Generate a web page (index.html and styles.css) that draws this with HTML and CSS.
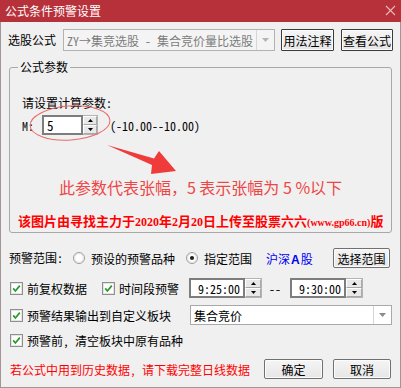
FILE: index.html
```html
<!DOCTYPE html>
<html lang="zh-CN">
<head>
  <meta charset="UTF-8" />
  <meta name="viewport" content="width=device-width, initial-scale=1.0"/>
  <title>公式条件预警设置</title>
  <link rel="stylesheet" href="styles.css">
</head>
<body>
  <div class="window">
    <div class="titlebar">
      <span class="title">公式条件预警设置</span>
      <svg class="close" width="11" height="11" viewBox="0 0 11 11"><path d="M1 1L10 10M10 1L1 10" stroke="#ecb9bb" stroke-width="1.1"/></svg>
    </div>

    <div class="row row-formula">
      <span class="label">选股公式</span>
      <div class="combo combo-formula is-disabled">
        <span class="combo-text">ZY→集竞选股 - 集合竞价量比选股</span>
        <span class="combo-btn"><svg width="7" height="4" viewBox="0 0 7 4"><path d="M0 0H7L3.5 4Z" fill="#b4b4b4"/></svg></span>
      </div>
      <button class="btn btn-dark btn-note">用法注释</button>
      <button class="btn btn-dark btn-view">查看公式</button>
    </div>

    <fieldset class="group">
      <legend>公式参数</legend>
      <div class="param-title">请设置计算参数:</div>
      <div class="param-row">
        <span class="param-name">M:</span>
        <div class="spin-edit">
          <span class="spin-input spin-input-m">5</span>
          <span class="spinner">
            <span class="spin-btn"><svg width="5" height="3" viewBox="0 0 5 3"><path d="M2.5 0L5 3H0Z" fill="#000"/></svg></span>
            <span class="spin-btn"><svg width="5" height="3" viewBox="0 0 5 3"><path d="M0 0H5L2.5 3Z" fill="#000"/></svg></span>
          </span>
        </div>
        <span class="param-range">(-10.00--10.00)</span>
      </div>
      <div class="note-big">此参数代表张幅，5 表示张幅为 5 %以下</div>
      <div class="note-upload">该图片由寻找主力于<span class="num">2020</span>年<span class="num">2</span>月<span class="num">20</span>日上传至股票六六<span class="url">(www.gp66.cn)</span>版</div>
    </fieldset>

    <div class="row row-range">
      <span class="label">预警范围:</span>
      <span class="radio">
        <svg width="12" height="12" viewBox="0 0 12 12"><circle cx="6" cy="6" r="5.5" fill="#fff" stroke="#9a9a9a"/><circle cx="6" cy="6" r="4.3" fill="none" stroke="#e2e2e2"/></svg>
      </span>
      <span class="opt-label">预设的预警品种</span>
      <span class="radio radio-second">
        <svg width="12" height="12" viewBox="0 0 12 12"><circle cx="6" cy="6" r="5.5" fill="#fff" stroke="#9a9a9a"/><circle cx="6" cy="6" r="4.3" fill="none" stroke="#e2e2e2"/><circle cx="6" cy="6" r="2.1" fill="#222"/></svg>
      </span>
      <span class="opt-label">指定范围</span>
      <span class="market">沪深<b class="market-a">A</b>股</span>
      <button class="btn btn-range">选择范围</button>
    </div>

    <div class="row row-time">
      <span class="check">
        <svg width="13" height="13" viewBox="0 0 13 13"><rect x="0.5" y="0.5" width="12" height="12" fill="#fff" stroke="#8e8f8f"/><rect x="1.5" y="1.5" width="10" height="10" fill="none" stroke="#e4e4e4"/><path d="M3.2 6.4L5.4 9L9.8 3.6" fill="none" stroke="#2a9a2a" stroke-width="1.7"/></svg>
      </span>
      <span class="opt-label">前复权数据</span>
      <span class="check check-second">
        <svg width="13" height="13" viewBox="0 0 13 13"><rect x="0.5" y="0.5" width="12" height="12" fill="#fff" stroke="#8e8f8f"/><rect x="1.5" y="1.5" width="10" height="10" fill="none" stroke="#e4e4e4"/><path d="M3.2 6.4L5.4 9L9.8 3.6" fill="none" stroke="#2a9a2a" stroke-width="1.7"/></svg>
      </span>
      <span class="opt-label">时间段预警</span>
      <div class="spin-edit spin-time">
        <span class="spin-input">9:25:00</span>
        <span class="spinner">
          <span class="spin-btn"><svg width="5" height="3" viewBox="0 0 5 3"><path d="M2.5 0L5 3H0Z" fill="#000"/></svg></span>
          <span class="spin-btn"><svg width="5" height="3" viewBox="0 0 5 3"><path d="M0 0H5L2.5 3Z" fill="#000"/></svg></span>
        </span>
      </div>
      <span class="dash">--</span>
      <div class="spin-edit spin-time">
        <span class="spin-input">9:30:00</span>
        <span class="spinner">
          <span class="spin-btn"><svg width="5" height="3" viewBox="0 0 5 3"><path d="M2.5 0L5 3H0Z" fill="#000"/></svg></span>
          <span class="spin-btn"><svg width="5" height="3" viewBox="0 0 5 3"><path d="M0 0H5L2.5 3Z" fill="#000"/></svg></span>
        </span>
      </div>
    </div>

    <div class="row row-output">
      <span class="check">
        <svg width="13" height="13" viewBox="0 0 13 13"><rect x="0.5" y="0.5" width="12" height="12" fill="#fff" stroke="#8e8f8f"/><rect x="1.5" y="1.5" width="10" height="10" fill="none" stroke="#e4e4e4"/><path d="M3.2 6.4L5.4 9L9.8 3.6" fill="none" stroke="#2a9a2a" stroke-width="1.7"/></svg>
      </span>
      <span class="opt-label">预警结果输出到自定义板块</span>
      <div class="combo combo-block">
        <span class="combo-text">集合竞价</span>
        <span class="combo-btn"><svg width="7" height="4" viewBox="0 0 7 4"><path d="M0 0H7L3.5 4Z" fill="#8a8a8a"/></svg></span>
      </div>
    </div>

    <div class="row row-clear">
      <span class="check">
        <svg width="13" height="13" viewBox="0 0 13 13"><rect x="0.5" y="0.5" width="12" height="12" fill="#fff" stroke="#8e8f8f"/><rect x="1.5" y="1.5" width="10" height="10" fill="none" stroke="#e4e4e4"/><path d="M3.2 6.4L5.4 9L9.8 3.6" fill="none" stroke="#2a9a2a" stroke-width="1.7"/></svg>
      </span>
      <span class="opt-label">预警前, 清空板块中原有品种</span>
    </div>

    <div class="row row-actions">
      <span class="warn">若公式中用到历史数据, 请下载完整日线数据</span>
      <button class="btn btn-ok">确定</button>
      <button class="btn btn-cancel">取消</button>
    </div>

    <!-- red annotation drawn over the dialog -->
    <svg class="annotation" width="401" height="388" viewBox="0 0 401 388">
      <ellipse cx="70" cy="123" rx="40" ry="17" transform="rotate(-4 70 123)" fill="none" stroke="#ea6a6a" stroke-width="1"/>
      <path d="M107 145L154 158.5L159 151L176 171L151 174L152 165Z" fill="#f03b3b"/>
    </svg>
  </div>
</body>
</html>
```

FILE: styles.css
```css
* {
  box-sizing: border-box;
}

body {
  margin: 0;
  background: #f0f0f0;
  color: #000;
  font-family: "Noto Sans Mono CJK SC", "Noto Sans CJK SC", sans-serif;
  font-size: 12px;
}

.window {
  position: relative;
  width: 401px;
  height: 388px;
  background: #f0f0f0;
  border: 1px solid #a39596;
  border-top: none;
}

.titlebar {
  display: flex;
  align-items: center;
  height: 22px;
  margin: 0 -1px;
  padding-left: 5px;
  background: #b7313a;
  color: #fff;
}

.title {
  font-size: 12px;
  line-height: 22px;
}

.close {
  margin-left: auto;
  margin-right: 5px;
  margin-top: -2px;
}

.row {
  display: flex;
  align-items: center;
  height: 20px;
  white-space: nowrap;
}

.label {
  line-height: 20px;
}

/* buttons */
.btn {
  height: 20px;
  padding: 0;
  font: inherit;
  color: #000;
  border: 1px solid #707070;
  border-radius: 2px;
  background: linear-gradient(#f5f5f5, #e6e6e6);
  box-shadow: inset 0 0 0 1px #fcfcfc;
}

.btn-dark {
  height: 22px;
  border-color: #3a3a3a;
  border-radius: 1px;
  font-size: 12px;
}

/* combo boxes */
.combo {
  display: flex;
  align-items: center;
  height: 22px;
  border: 1px solid #a9a9a9;
  background: #fff;
}

.combo-text {
  flex: 1;
  padding-left: 3px;
  overflow: hidden;
}

.combo-btn {
  display: flex;
  align-items: center;
  justify-content: center;
  width: 18px;
  height: 100%;
  border-left: 1px solid #d6d6d6;
}

.is-disabled {
  background: #f4f4f4;
  border-color: #b2b2b2;
  color: #7c7c7c;
}

/* first row */
.row-formula {
  height: 22px;
  margin-top: 7px;
  padding-left: 7px;
}

.combo-formula {
  width: 212px;
  margin-left: 7px;
}

.btn-note {
  width: 53px;
  margin-left: 6px;
}

.btn-view {
  width: 52px;
  margin-left: 7px;
}

/* group box */
.group {
  margin: 8px 8px 0 8px;
  padding: 0 8px 1px 8px;
  border: 1px solid #a8a8a8;
  border-radius: 3px;
  min-width: 0;
}

.group legend {
  padding: 0 2px;
  line-height: 16px;
}

.param-title {
  margin: 20px 0 0 4px;
  line-height: 16px;
}

.param-row {
  display: flex;
  align-items: center;
  height: 20px;
  margin: 4px 0 0 4px;
}

.param-name {
  width: 20px;
}

.param-range {
  margin-left: 12px;
}

.note-big {
  margin-top: 42px;
  line-height: 20px;
  text-align: center;
  font-family: "Noto Sans CJK SC", sans-serif;
  font-size: 16px;
  color: #ee4646;
  white-space: nowrap;
}

.note-upload {
  margin-top: 16px;
  line-height: 16px;
  text-align: center;
  font-family: "Noto Sans CJK SC", sans-serif;
  font-size: 13px;
  font-weight: bold;
  color: #f00;
  white-space: nowrap;
}

.note-upload .num {
  font-family: "Liberation Serif", serif;
  font-size: 12px;
}

.note-upload .url {
  font-family: "Liberation Serif", serif;
  font-size: 10px;
}

/* spin edits */
.spin-edit {
  display: flex;
  height: 20px;
}

.spin-input {
  display: flex;
  align-items: center;
  height: 20px;
  background: #fff;
  border: 2px solid #7d7d7d;
}

.spin-input-m {
  width: 41px;
  padding-left: 3px;
  font-size: 13px;
}

.spinner {
  display: flex;
  flex-direction: column;
  width: 15px;
  height: 20px;
  border: 1px solid #b4b4b4;
  border-left: none;
  background: #f2f2f2;
}

.spin-btn {
  flex: 1;
  display: flex;
  align-items: center;
  justify-content: center;
  border: 1px solid #fff;
  border-bottom-color: #a8a8a8;
  border-right-color: #a8a8a8;
  background: #e8e8e8;
}

.spin-time .spin-input {
  width: 56px;
  padding-left: 7px;
}

.spin-time .spinner {
  width: 17px;
}

/* range row */
.row-range {
  margin-top: 15px;
  padding-left: 8px;
  padding-right: 10px;
}

.row-range .label {
  width: 64px;
}

.radio {
  display: flex;
  width: 12px;
}

.radio-second {
  margin-left: 11px;
}

.opt-label {
  margin-left: 6px;
}

.check + .opt-label {
  margin-left: 4px;
}

.market {
  margin-left: 14px;
  color: #0000f0;
}

.market-a {
  font-family: "Liberation Sans", sans-serif;
  padding: 0 1px;
}

.btn-range {
  width: 57px;
  margin-left: auto;
}

/* checkbox rows */
.check {
  display: flex;
  width: 13px;
}

.row-time {
  margin-top: 10px;
  padding-left: 9px;
}

.check-second {
  margin-left: 15px;
}

.row-time .spin-time {
  margin-left: 10px;
}

.dash {
  width: 12px;
  margin-left: 7px;
}

.dash + .spin-time {
  margin-left: 9px;
}

.row-output {
  margin-top: 7px;
  padding-left: 9px;
  padding-right: 8px;
}

.combo-block {
  width: 202px;
  height: 20px;
  margin-left: auto;
}

.row-clear {
  margin-top: 5px;
  padding-left: 9px;
}

.row-actions {
  margin-top: 9px;
  padding-left: 9px;
  padding-right: 9px;
}

.warn {
  color: #f00;
}

.btn-ok {
  width: 59px;
  margin-left: auto;
}

.btn-cancel {
  width: 58px;
  margin-left: 10px;
}

.annotation {
  position: absolute;
  left: -1px;
  top: 0;
  pointer-events: none;
}
```
